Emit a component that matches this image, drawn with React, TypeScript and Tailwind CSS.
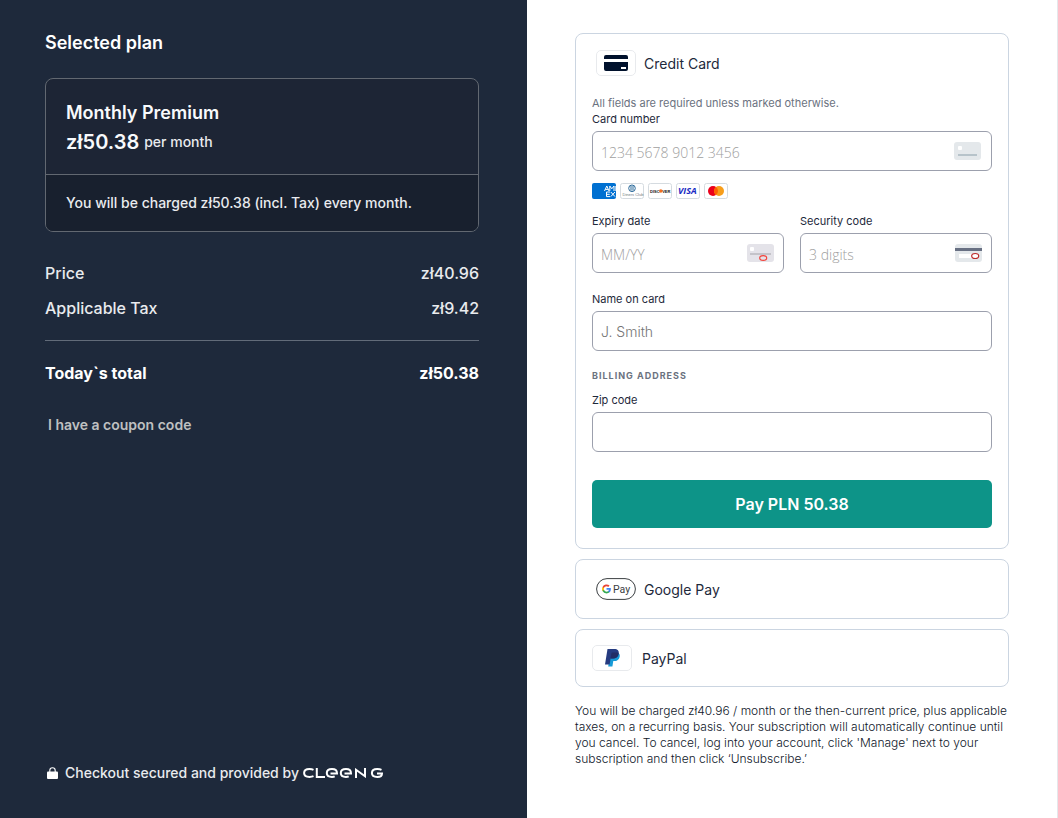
import type { ReactNode } from 'react';

const fieldClass =
  'h-10 w-full rounded-[6px] border border-[#9ca0ad] bg-white px-2 text-[#1e293b] outline-none focus:border-[#0d9488]';
const hostedFieldClass =
  "pt-0.5 font-['Open_Sans',sans-serif] text-[14px] font-light placeholder:text-[#a0a0a0]";

function Field({ id, label, placeholder, hosted, icon }: {
  id: string;
  label: string;
  placeholder?: string;
  hosted?: boolean;
  icon?: ReactNode;
}) {
  return (
    <div>
      <label htmlFor={id} className="block text-[11px] leading-4 text-[#1e293b]">{label}</label>
      <div className="relative mt-1">
        <input
          id={id}
          type="text"
          placeholder={placeholder}
          className={`${fieldClass} ${hosted ? hostedFieldClass : 'text-[14px] font-light placeholder:text-[#757575]'}`}
        />
        {icon && <span className="pointer-events-none absolute top-[11px] right-[9px]">{icon}</span>}
      </div>
    </div>
  );
}

function NumberIcon() {
  return (
    <svg width="28" height="18" viewBox="0 0 28 18" className="mr-px block">
      <rect width="27" height="18" rx="3" fill="#e4e8eb" />
      <rect x="4" y="4" width="4" height="4" rx="1" fill="#fff" />
      <rect x="4" y="12" width="19" height="2" fill="#b7c3ca" />
    </svg>
  );
}

function ExpiryIcon() {
  return (
    <svg width="28" height="18" viewBox="0 0 28 18" className="block">
      <rect width="27" height="18" rx="3" fill="#e4e3e9" />
      <rect x="3" y="3" width="4" height="4" rx="1" fill="#fff" />
      <rect x="3" y="9" width="21" height="2" fill="#c4c3c9" />
      <ellipse cx="16.200" cy="14" rx="3.500" ry="2.400" fill="#e4e3e9" stroke="#f2453d" strokeWidth="1.200" />
    </svg>
  );
}

function CodeIcon() {
  return (
    <svg width="28" height="18" viewBox="0 0 28 18" className="block">
      <rect width="27" height="18" rx="3" fill="#e4e8eb" />
      <rect y="4" width="27" height="3" fill="#687083" />
      <rect x="4" y="10" width="13" height="4" fill="#fff" />
      <ellipse cx="20.200" cy="12" rx="3.500" ry="2.500" fill="#fff" stroke="#bd2b2b" strokeWidth="1.200" />
    </svg>
  );
}

function CardBrands() {
  return (
    <div className="mt-3 flex gap-1" role="group" aria-label="Accepted cards">
      <svg width="24" height="16" viewBox="0 0 24 16">
        <rect width="24" height="16" rx="2" fill="#0070d1" />
        <g fill="none" stroke="#fff" strokeWidth="1">
          <path d="M12.500 8 14.800 3 17 8M13.500 6.400h2.800M17.800 8V3l2 2.800L22 3v5M23.900 3v5" />
          <path d="M18 9h-3.500v4.600H18M14.500 11.300h3.200M18.800 9l4.200 4.600M23 9l-4.200 4.600" />
        </g>
      </svg>
      <svg width="24" height="16" viewBox="0 0 24 16">
        <rect x=".5" y=".5" width="23" height="15" rx="2" fill="#fff" stroke="#d5dbe0" />
        <circle cx="12" cy="5.300" r="3.300" fill="#fff" stroke="#2b6a9b" strokeWidth="1" />
        <path d="M11 3v4.600M13 3v4.600" stroke="#2b6a9b" strokeWidth="1" />
        <text x="2.500" y="13.200" fontSize="4" fill="#737b82" fontFamily="Liberation Sans, sans-serif">Diners Club</text>
      </svg>
      <svg width="24" height="16" viewBox="0 0 24 16">
        <rect x=".5" y=".5" width="23" height="15" rx="2" fill="#fff" stroke="#d5dbe0" />
        <text x="2" y="9.500" fontSize="4" fontWeight="700" fill="#111" fontFamily="Liberation Sans, sans-serif">DISC</text>
        <circle cx="12.800" cy="8" r="1.800" fill="#f37021" />
        <text x="14.200" y="9.500" fontSize="4" fontWeight="700" fill="#111" fontFamily="Liberation Sans, sans-serif">VER</text>
      </svg>
      <svg width="24" height="16" viewBox="0 0 24 16">
        <rect x=".5" y=".5" width="23" height="15" rx="2" fill="#fff" stroke="#d5dbe0" />
        <text x="2" y="11.400" fontSize="9" fontWeight="700" fontStyle="italic" fill="#1a2bc4" fontFamily="Open Sans, sans-serif">VISA</text>
      </svg>
      <svg width="24" height="16" viewBox="0 0 24 16">
        <rect x=".5" y=".5" width="23" height="15" rx="2" fill="#fff" stroke="#d5dbe0" />
        <circle cx="9" cy="8" r="5" fill="#eb001b" />
        <circle cx="15" cy="8" r="5" fill="#f79e1b" />
        <path d="M12 4a5 5 0 0 1 0 8 5 5 0 0 1 0-8Z" fill="#ff5f00" />
      </svg>
    </div>
  );
}

function CreditCardIcon() {
  return (
    <svg width="40" height="26" viewBox="0 0 40 26">
      <rect x=".5" y=".5" width="39" height="25" rx="4.5" fill="#fff" stroke="#e8eaed" />
      <path d="M8 7a2 2 0 0 1 2-2h20a2 2 0 0 1 2 2v2H8ZM8 12h24v7a2 2 0 0 1-2 2H10a2 2 0 0 1-2-2Z" fill="#00112c" />
      <rect x="25" y="17" width="5" height="2" fill="#fff" />
    </svg>
  );
}

function GooglePayIcon() {
  return (
    <svg width="40" height="22" viewBox="0 0 40 22">
      <rect x=".6" y=".6" width="38.8" height="20.8" rx="10.4" fill="#fff" stroke="#3c4043" strokeWidth="1" />
      <g transform="translate(5.6 6) scale(.41)">
        <path fill="#4285F4" d="M22.56 12.25c0-.78-.07-1.53-.2-2.25H12v4.26h5.92a5.06 5.06 0 0 1-2.2 3.32v2.77h3.57c2.08-1.92 3.27-4.74 3.27-8.1Z" />
        <path fill="#34A853" d="M12 23c2.97 0 5.46-.98 7.28-2.66l-3.57-2.77c-.98.66-2.23 1.06-3.71 1.06-2.86 0-5.29-1.93-6.16-4.53H2.18v2.84A11 11 0 0 0 12 23Z" />
        <path fill="#FBBC05" d="M5.84 14.09a6.6 6.6 0 0 1 0-4.18V7.07H2.18a11 11 0 0 0 0 9.86Z" />
        <path fill="#EA4335" d="M12 5.38c1.62 0 3.06.56 4.21 1.64l3.15-3.15A11 11 0 0 0 2.18 7.07l3.66 2.84C6.71 7.31 9.14 5.38 12 5.38Z" />
      </g>
      <text x="17" y="14.8" fontSize="10.5" fill="#3c4043" fontFamily="Roboto, sans-serif">Pay</text>
    </svg>
  );
}

function PayPalIcon() {
  return (
    <svg width="40" height="26" viewBox="0 0 40 26">
      <rect x=".5" y=".5" width="39" height="25" rx="4.5" fill="#fff" stroke="#e8eaed" />
      <path d="M26.7 8.2c1 .8 1.3 2 1 3.5-.6 3.1-2.6 4.400-5.600 4.400h-.8l-.9 5.400h-4.200l.4-2.400 2-8.900Z" fill="#179bd7" />
      <path d="M15.500 4h6.800c3.300 0 5 1.700 4.400 4.800-.6 3.400-2.800 4.800-6.100 4.800h-2l-1 5.900H13Z" fill="#253b80" />
      <path d="M19.400 8.200c.1-.5.4-.7.9-.7h4.600c.7 0 1.300.2 1.800.5-.4 3.900-2.700 5.600-6.100 5.600h-2Z" fill="#222d65" />
    </svg>
  );
}

function CleengLogo() {
  return (
    <svg width="80" height="10" viewBox="0 0 80 10" role="img" aria-label="Cleeng" fill="none" stroke="#fff" strokeWidth="2">
      <path d="M10.500 1.800Q9 1.100 6.500 1.100C3 1.100 1.100 2.500 1.100 5s1.900 3.900 5.400 3.900q2.500 0 4-.7" />
      <path d="M13.800 0v8.900H22" />
      <path d="M27.500 5.400h6.500C34 2.500 32 1.100 29 1.100c-3.300 0-5.200 1.500-5.200 3.900s1.900 3.900 5.200 3.900q1.700 0 2.700-.5" />
      <path d="M41.500 5.400h6.500C48 2.500 46 1.100 43 1.100c-3.300 0-5.200 1.500-5.200 3.900s1.900 3.900 5.200 3.900q1.700 0 2.700-.5" />
      <path d="M53 10V1.800l9 6.400V0" />
      <path d="M78.500 1.800Q77 1.100 74.300 1.100c-3.500 0-5.400 1.400-5.400 3.900s1.900 3.900 5.400 3.900c2.800 0 4.700-1.100 4.700-3.500h-5" />
    </svg>
  );
}

function SummaryRow({ label, value, bold }: { label: string; value: string; bold?: boolean }) {
  return (
    <div className={`flex justify-between text-[16px] leading-5 ${bold ? 'font-bold text-white' : 'font-medium text-[#e9ebee]'}`}>
      <dt>{label}</dt>
      <dd>{value}</dd>
    </div>
  );
}

export default function App() {
  return (
    <div className="grid min-h-screen grid-cols-[527fr_530fr] border-r border-[#e5e7eb] bg-white font-['Inter',sans-serif]">
      <aside className="flex flex-col bg-[#1e293b] pt-8 pr-12 pb-9 pl-[45px] text-[#e9ebee]">
        <h1 className="text-[18px] leading-[22px] font-semibold text-white">Selected plan</h1>

        <section className="mt-6 overflow-hidden rounded-[8px] border border-[#626871] bg-[#1d2535]">
          <div className="px-5 pt-[22px] pb-[19px]">
            <h2 className="text-[18px] leading-6 font-semibold text-[#f8fafc]">Monthly Premium</h2>
            <p className="mt-[5px] flex items-start gap-[5px]">
              <strong className="text-[20px] leading-[25px] font-semibold text-[#f8fafc]">zł50.38</strong>
              <span className="text-[14px] leading-6 font-medium">per month</span>
            </p>
          </div>
          <p className="border-t border-[#626871] bg-[#18202e] px-5 py-[18px] text-[14px] leading-5 font-medium">
            You will be charged zł50.38 (incl. Tax) every month.
          </p>
        </section>

        <dl className="mt-[31px]">
          <SummaryRow label="Price" value="zł40.96" />
          <div className="mt-[15px] border-b border-[#626b79] pb-[22px]">
            <SummaryRow label="Applicable Tax" value="zł9.42" />
          </div>
          <div className="mt-[22px]">
            <SummaryRow label="Today`s total" value="zł50.38" bold />
          </div>
        </dl>

        <button type="button" className="mt-8 ml-[3px] self-start text-[14px] leading-5 font-semibold text-[#bfc0c1]">
          I have a coupon code
        </button>

        <footer className="mt-auto flex items-center text-[14px] leading-[18px] font-medium">
          <svg width="11" height="12" viewBox="0 0 11 12" className="ml-[2px]">
            <rect y="4.500" width="11" height="7.500" rx="1" fill="#fff" />
            <path d="M2.800 5V3.500a2.700 2.700 0 0 1 5.400 0V5" fill="none" stroke="#fff" strokeWidth="1.100" />
          </svg>
          <span className="ml-[7px]">Checkout secured and provided by</span>
          <a href="#cleeng" className="ml-1"><CleengLogo /></a>
        </footer>
      </aside>

      <main className="px-12 pt-[33px]">
        <section className="rounded-[8px] border border-[#cbd5e1] px-4 pt-4 pb-5">
          <h2 className="flex items-center gap-2 pl-1 text-[14px] text-[#1e293b]">
            <CreditCardIcon />
            Credit Card
          </h2>
          <form onSubmit={(event) => event.preventDefault()}>
            <p className="mt-[19px] text-[11px] leading-4 text-[#6b7280]">All fields are required unless marked otherwise.</p>
            <Field id="card-number" label="Card number" placeholder="1234 5678 9012 3456" hosted icon={<NumberIcon />} />
            <CardBrands />
            <div className="mt-[14px] grid grid-cols-2 gap-4">
              <Field id="expiry" label="Expiry date" placeholder="MM/YY" hosted icon={<ExpiryIcon />} />
              <Field id="code" label="Security code" placeholder="3 digits" hosted icon={<CodeIcon />} />
            </div>
            <div className="mt-[18px]">
              <Field id="holder" label="Name on card" placeholder="J. Smith" />
            </div>
            <h3 className="mt-[17px] mb-2 text-[9px] leading-4 font-bold tracking-[1px] text-[#6b7280]">BILLING ADDRESS</h3>
            <Field id="zip" label="Zip code" />
            <button type="submit" className="mt-7 h-12 w-full rounded-[5px] bg-[#0d9488] text-[16px] font-semibold text-white">
              Pay PLN 50.38
            </button>
          </form>
        </section>

        <button type="button" className="mt-[10px] flex h-[60px] w-full items-center gap-2 rounded-[8px] border border-[#cbd5e1] px-5 text-[14px] text-[#1e293b]">
          <GooglePayIcon />
          Google Pay
        </button>
        <button type="button" className="mt-[10px] flex h-[58px] w-full items-center gap-[10px] rounded-[8px] border border-[#cbd5e1] px-4 text-[14px] text-[#1e293b]">
          <PayPalIcon />
          PayPal
        </button>

        <p className="mt-4 text-[12px] leading-4 font-light text-[#0f172a]">
          You will be charged zł40.96 / month or the then-current price, plus applicable taxes, on a recurring basis. Your
          subscription will automatically continue until you cancel. To cancel, log into your account, click 'Manage' next to
          your subscription and then click ‘Unsubscribe.’
        </p>
      </main>
    </div>
  );
}
